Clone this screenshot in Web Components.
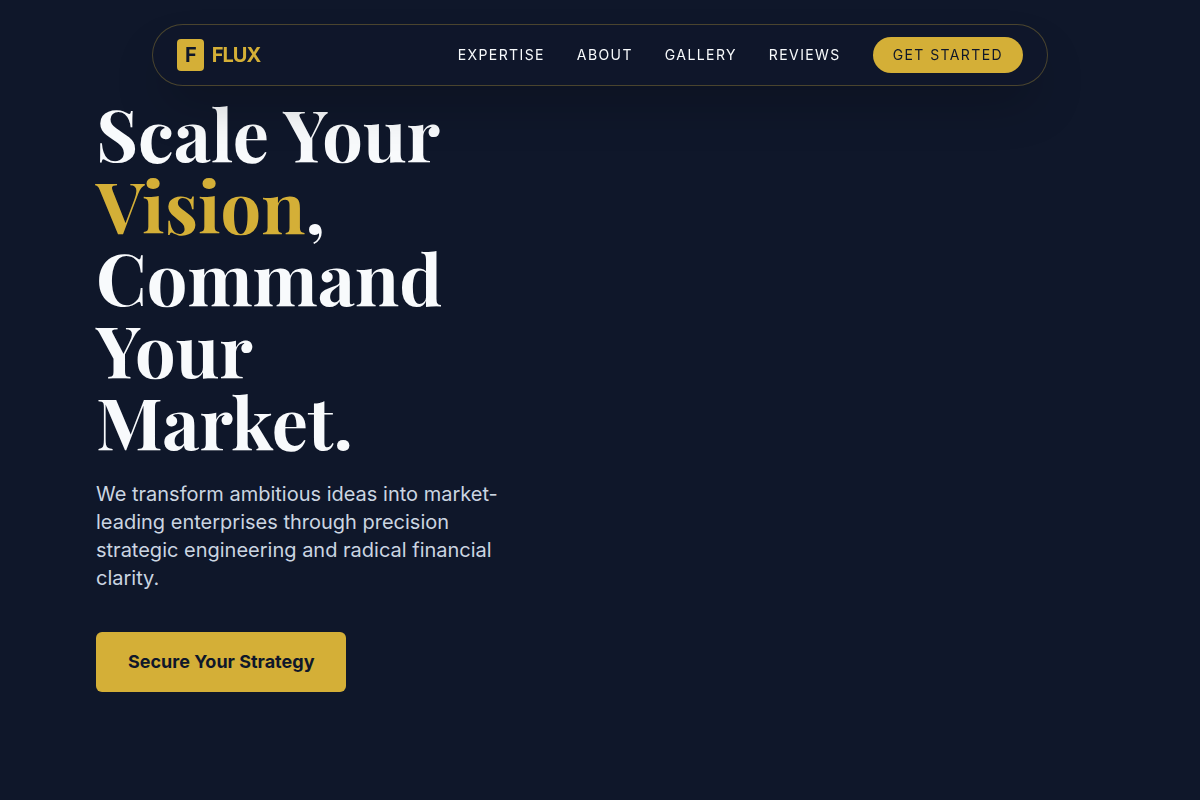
<!DOCTYPE html>
<html lang="en">
<head>
<meta charset="utf-8">
<meta name="viewport" content="width=device-width, initial-scale=1">
<title>FLUX</title>
<style>
  :root {
    --navy: #0f172a;
    --gold: #d4af37;
    --white: #f8fafc;
    --muted: #cbd5e1;
  }
  body {
    margin: 0;
    background: var(--navy);
    color: var(--white);
    font-family: Inter, sans-serif;
  }
</style>
</head>
<body>
<flux-page>
  <flux-nav slot="header">
    <flux-logo slot="brand" initial="F">FLUX</flux-logo>
    <nav-link href="#expertise">Expertise</nav-link>
    <nav-link href="#about">About</nav-link>
    <nav-link href="#gallery">Gallery</nav-link>
    <nav-link href="#reviews">Reviews</nav-link>
    <nav-link href="#start" pill>Get Started</nav-link>
  </flux-nav>
  <flux-hero>
    <span slot="title">Scale Your <hero-accent>Vision</hero-accent>, Command Your Market.</span>
    <span slot="lead">We transform ambitious ideas into market-leading enterprises through precision strategic engineering and radical financial clarity.</span>
    <span slot="action">Secure Your Strategy</span>
  </flux-hero>
</flux-page>

<script>
const define = (name, html, setup) => {
  const template = document.createElement('template');
  template.innerHTML = html;
  customElements.define(name, class extends HTMLElement {
    constructor() {
      super();
      this.attachShadow({ mode: 'open' }).append(template.content.cloneNode(true));
    }
    connectedCallback() {
      if (setup) setup(this, this.shadowRoot);
    }
  });
};

define('flux-page', `
  <style>
    :host { display: block; min-height: 100vh; }
    header { position: fixed; top: 24px; left: 24px; right: 24px; z-index: 10; }
  </style>
  <header><slot name="header"></slot></header>
  <main><slot></slot></main>`);

define('flux-nav', `
  <style>
    :host {
      display: block; box-sizing: border-box; max-width: 896px; margin: 0 auto;
      padding: 12px 24px; border: 1px solid rgba(212, 175, 55, .3); border-radius: 32px;
      background: rgba(15, 23, 42, .8);
      box-shadow: 0 25px 50px -12px rgba(0, 0, 0, .25);
    }
    nav, .links { display: flex; align-items: center; }
    nav { justify-content: space-between; }
    .links { gap: 32px; }
  </style>
  <nav aria-label="Main"><slot name="brand"></slot><div class="links"><slot></slot></div></nav>`);

define('flux-logo', `
  <style>
    :host { display: block; }
    a {
      display: flex; align-items: center; gap: 8px; color: var(--gold);
      font-size: 20px; line-height: 28px; font-weight: 700; letter-spacing: -0.05em;
      text-decoration: none;
    }
    .mark {
      padding: 2px 8px; border-radius: 4px; background: var(--gold); color: var(--navy);
    }
  </style>
  <a href="#top"><span class="mark"></span><span><slot></slot></span></a>`,
  (host, root) => { root.querySelector('.mark').textContent = host.getAttribute('initial'); });

define('nav-link', `
  <style>
    :host { display: block; }
    a {
      display: block; color: var(--white); font-size: 14px; line-height: 20px;
      letter-spacing: 0.1em; text-transform: uppercase; text-decoration: none; white-space: nowrap;
    }
    :host([pill]) a {
      padding: 8px 20px; border-radius: 18px; background: var(--gold); color: var(--navy);
    }
  </style>
  <a><slot></slot></a>`,
  (host, root) => { root.querySelector('a').href = host.getAttribute('href'); });

define('hero-accent', `
  <style>:host { color: var(--gold); }</style><slot></slot>`);

define('flux-hero', `
  <style>
    :host { display: block; padding: 96px; }
    .content { max-width: 416px; }
    h1 {
      margin: 0 0 24px; font-family: "Playfair Display", "Liberation Serif", serif;
      font-size: 72px; line-height: 72px; font-weight: 700;
    }
    p { margin: 0 0 40px; color: var(--muted); font-size: 20px; line-height: 28px; }
    button {
      padding: 16px 32px; border: 0; border-radius: 6px; background: var(--gold);
      color: var(--navy); font: 700 18px/28px Inter, sans-serif; cursor: pointer;
    }
  </style>
  <section class="content">
    <h1><slot name="title"></slot></h1>
    <p><slot name="lead"></slot></p>
    <button type="button"><slot name="action"></slot></button>
  </section>`);
</script>
</body>
</html>
